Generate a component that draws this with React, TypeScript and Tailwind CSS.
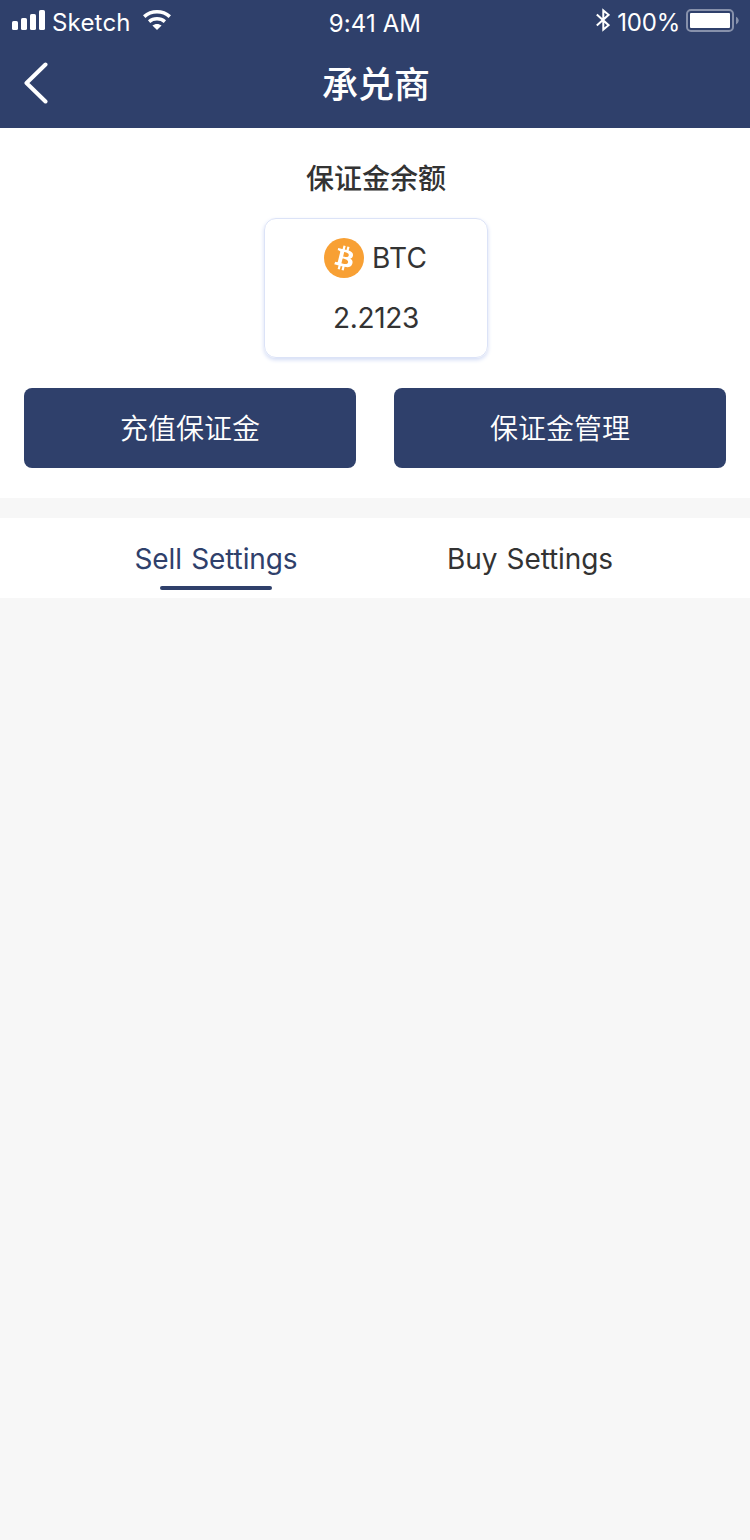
function SignalIcon() {
  return (
    <svg width="34" height="20" viewBox="0 0 34 20" fill="white" className="shrink-0">
      <rect x="0" y="11" width="6" height="9" rx="1.6" />
      <rect x="9" y="8" width="6" height="12" rx="1.6" />
      <rect x="18" y="4" width="6" height="16" rx="1.6" />
      <rect x="27" y="0" width="6" height="20" rx="1.6" />
    </svg>
  );
}

function WifiIcon() {
  return (
    <svg width="28" height="20" viewBox="0 0 28 20" fill="none" stroke="white" className="shrink-0">
      <path d="M1.2 6.6C8.4 0.2 19.6 0.2 26.8 6.6" strokeWidth="3.6" />
      <path d="M6.1 11.6C10.6 7.8 17.4 7.8 21.9 11.6" strokeWidth="3.5" />
      <path d="M9.4 15.6c2.6-2.2 6.6-2.2 9.2 0L14 20z" fill="white" stroke="none" />
    </svg>
  );
}

function BluetoothIcon() {
  return (
    <svg width="14" height="24" viewBox="0 0 14 24" fill="none" stroke="white" strokeWidth="2" className="shrink-0">
      <path d="M0.8 6.6 12.6 17.2 7.3 21.6V2.4l5.3 4.4L0.8 17.4" />
    </svg>
  );
}

function BatteryIcon() {
  return (
    <svg width="53" height="23" viewBox="0 0 53 23" className="shrink-0">
      <rect x="1" y="1" width="46" height="21" rx="4" fill="none" stroke="#8791ab" strokeWidth="2" />
      <rect x="4" y="4" width="40" height="15" rx="1" fill="white" />
      <path d="M50 7.8c3.6 1.6 3.6 6 0 7.6z" fill="#8791ab" />
    </svg>
  );
}

function BitcoinIcon() {
  return (
    <svg width="40" height="40" viewBox="0 0 32 32" className="shrink-0">
      <circle cx="16" cy="16" r="16" fill="#f8a034" />
      <path
        fill="white"
        d="M23.189 14.02c.314-2.096-1.283-3.223-3.465-3.975l.708-2.84-1.728-.43-.69 2.765c-.454-.114-.92-.22-1.385-.326l.695-2.783L15.596 6l-.708 2.839c-.376-.086-.746-.17-1.104-.26l.002-.009-2.384-.595-.46 1.846s1.283.294 1.256.312c.7.175.826.638.805 1.006l-.806 3.235c.048.012.11.03.18.057l-.183-.045-1.13 4.532c-.086.212-.303.531-.793.41.018.025-1.256-.313-1.256-.313l-.858 1.978 2.25.561c.418.105.828.215 1.231.318l-.715 2.872 1.727.43.708-2.84c.472.127.93.245 1.378.357l-.706 2.828 1.728.43.715-2.866c2.948.558 5.164.333 6.097-2.333.752-2.146-.037-3.385-1.588-4.192 1.13-.26 1.98-1.003 2.207-2.538zm-3.95 5.538c-.533 2.147-4.148.986-5.32.695l.95-3.805c1.172.293 4.929.872 4.37 3.11zm.535-5.569c-.487 1.953-3.495.96-4.47.717l.86-3.45c.975.243 4.118.696 3.61 2.733z"
      />
    </svg>
  );
}

function StatusBar() {
  return (
    <div className="grid h-10 grid-cols-3 text-2xl leading-10">
      <div className="flex h-10 items-start pl-3">
        <span className="pt-2.5">
          <SignalIcon />
        </span>
        <span className="ml-1.5 w-[79px] pt-[3px] tracking-[0.2px]">Sketch</span>
        <span className="ml-3 pt-2.5">
          <WifiIcon />
        </span>
      </div>
      <div className="pt-1 text-center tracking-[0.1px]">9:41 AM</div>
      <div className="flex h-10 items-start justify-end pr-[11px]">
        <span className="pt-2">
          <BluetoothIcon />
        </span>
        <span className="ml-[7px] pt-[3px] tracking-[-0.2px]">100%</span>
        <span className="ml-1.5 pt-[9px]">
          <BatteryIcon />
        </span>
      </div>
    </div>
  );
}

export default function App() {
  return (
    <div className="min-h-[1540px] w-[750px] bg-[#f7f7f7] font-[Inter,'Noto_Sans_CJK_SC',sans-serif] text-[#333333]">
      <header className="h-32 bg-[#2f406b] text-white">
        <StatusBar />
        <div className="grid h-[86px] grid-cols-[80px_1fr_78px] items-center">
          <button className="pl-6" aria-label="返回">
            <svg width="24" height="42" viewBox="0 0 24 42" fill="none" stroke="white" strokeWidth="4" strokeLinecap="round" strokeLinejoin="round">
              <path d="M21.5 2.5 2.5 21l19 18.5" />
            </svg>
          </button>
          <h1 className="pt-1 text-center text-4xl font-medium">承兑商</h1>
        </div>
      </header>

      <section className="flex h-[370px] flex-col items-center bg-white px-6 pt-[31px]">
        <h2 className="pl-0.5 text-[28px] leading-10 font-medium">保证金余额</h2>
        <div className="mt-[19px] ml-0.5 flex h-[140px] w-56 flex-col items-center rounded-xl border border-[#dce3f7] pt-[19px] shadow-[0_2px_4px_#d3dcf5]">
          <div className="flex items-center gap-2">
            <BitcoinIcon />
            <span className="w-14 text-[28px] leading-10 tracking-[0.3px]">BTC</span>
          </div>
          <span className="mt-5 text-[28px] leading-10 tracking-[-0.3px]">2.2123</span>
        </div>
        <div className="mt-[30px] grid w-full grid-cols-2 gap-[38px] text-[28px] font-[350] text-white">
          <button className="h-20 rounded-lg bg-[#2f406b] pt-0.5">充值保证金</button>
          <button className="h-20 rounded-lg bg-[#2f406b] pt-0.5">保证金管理</button>
        </div>
      </section>

      <nav className="mt-5 grid h-20 grid-cols-[314px_314px] bg-white pl-[59px] text-[28px] leading-10 tracking-[-0.1px] [word-spacing:1.5px]">
        <div className="flex flex-col items-center pt-[21px] text-[#2f406b]">
          <span>Sell Settings</span>
          <span className="mt-[7px] h-1 w-28 rounded-full bg-[#2f406b]" />
        </div>
        <div className="flex flex-col items-center pt-[21px]">
          <span>Buy Settings</span>
        </div>
      </nav>
    </div>
  );
}
